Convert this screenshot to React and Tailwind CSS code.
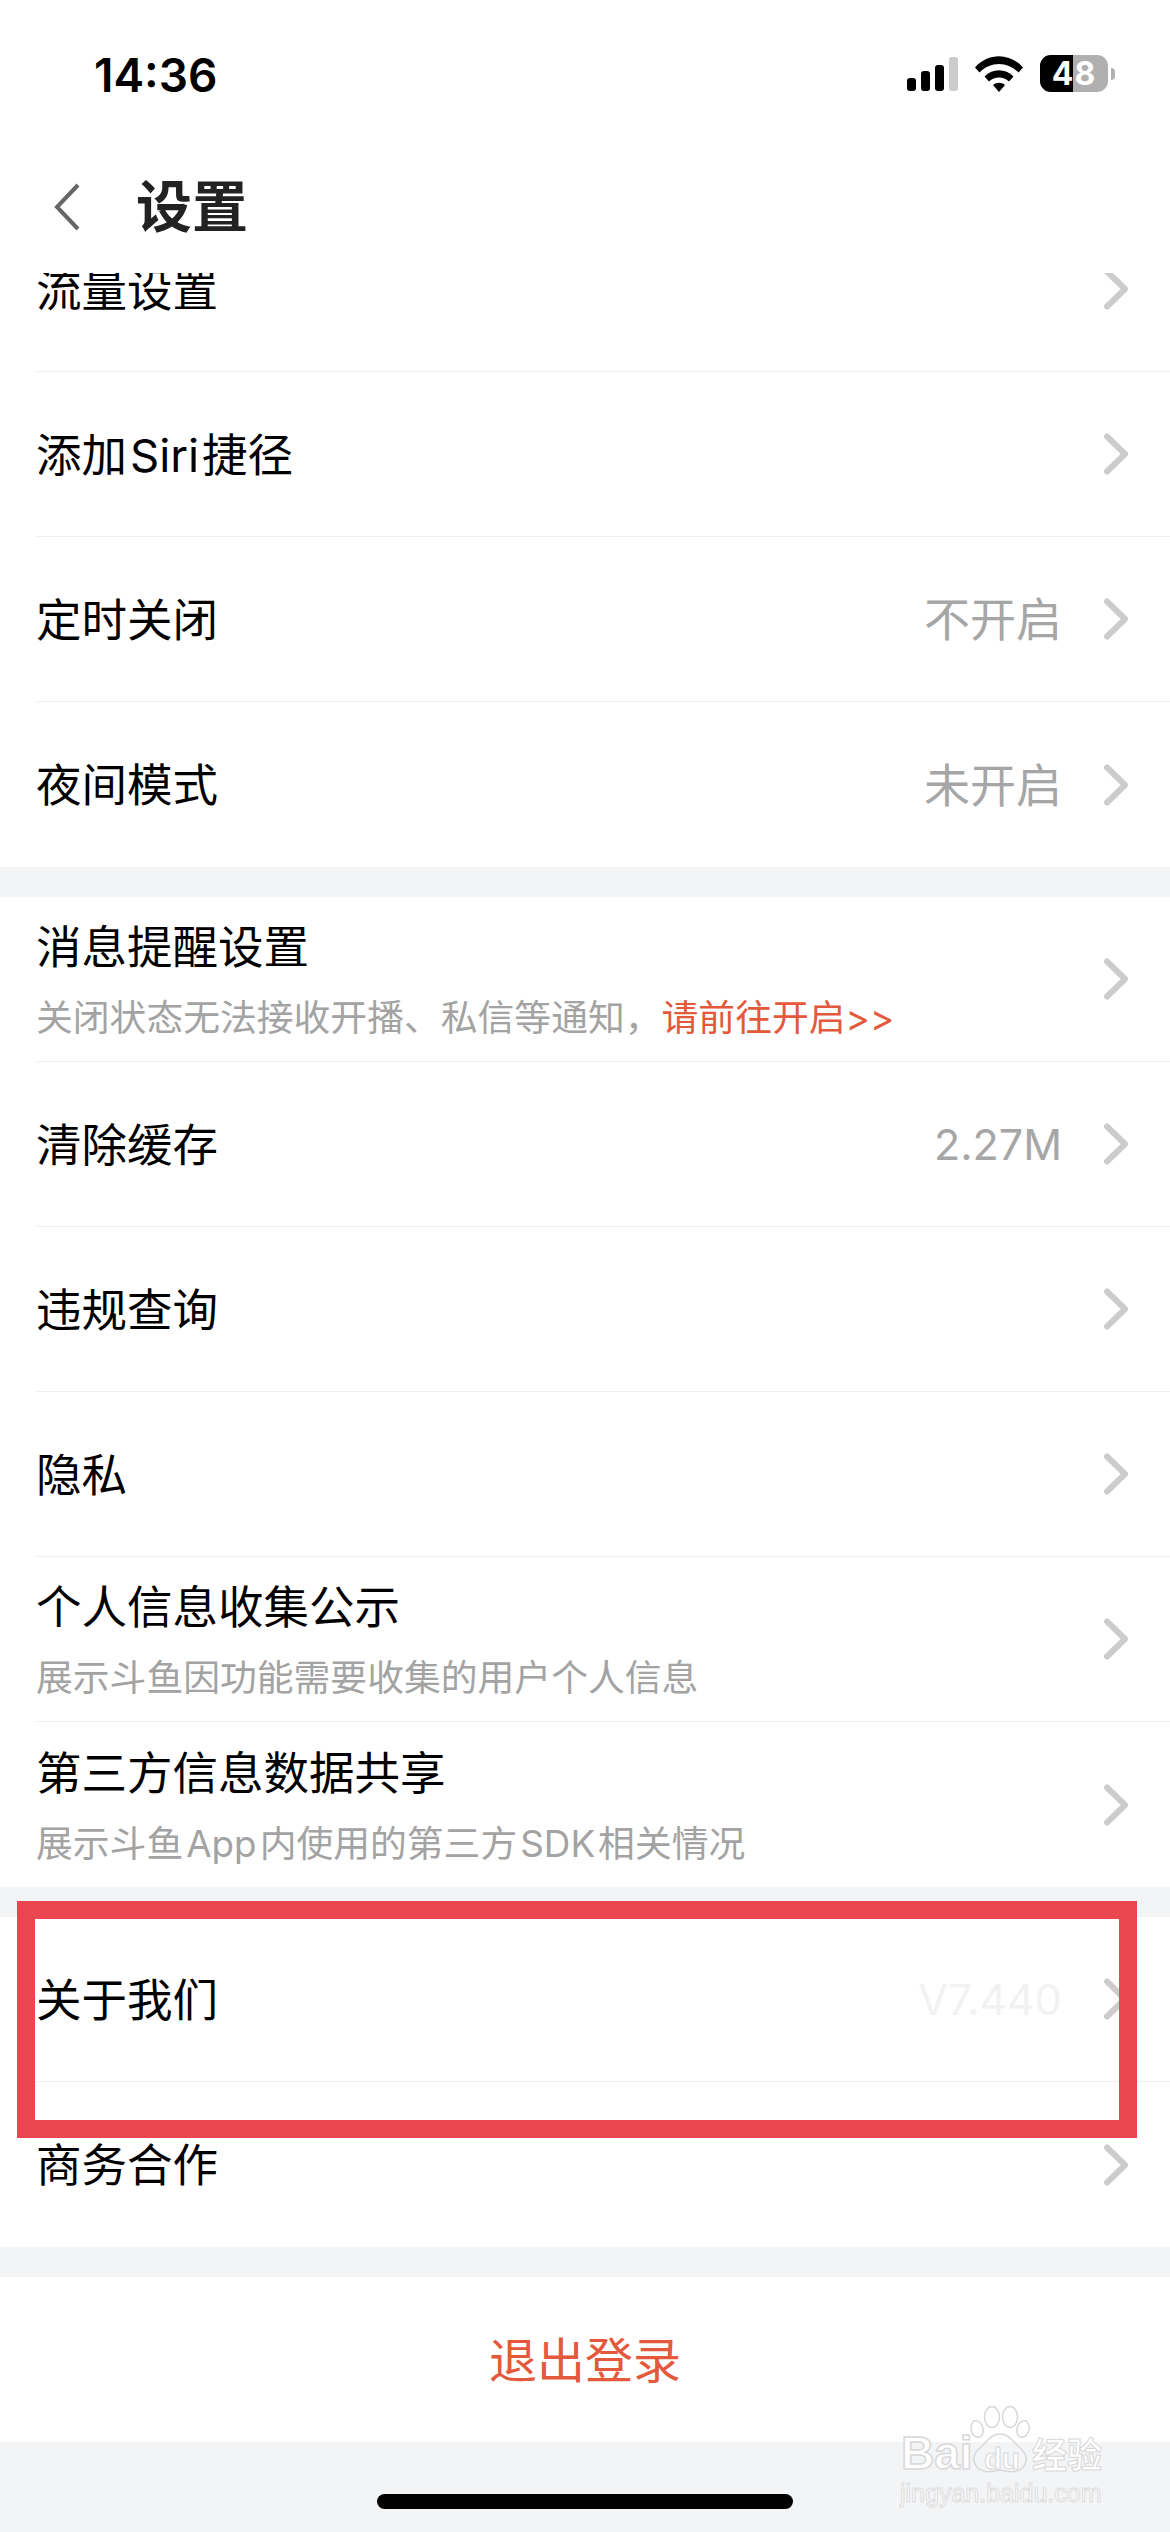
import React from 'react';

const Chevron = () => (
  <svg width="26" height="42" viewBox="0 0 26 42" fill="none" className="shrink-0">
    <path d="M4 3.500l18 17.500L4 38.500" stroke="#cccccc" strokeWidth="6" strokeLinecap="round" strokeLinejoin="round" />
  </svg>
);

const Latin = ({ children }) => <span className="mx-[3px]">{children}</span>;

const Row = ({ title, sub, value, valueClass = 'text-[46px] text-[#a6a6a6]' }) => (
  <div className="h-[165px] ml-[36px] pr-[41px] flex items-center border-b border-[#efefef] last:border-b-0">
    <div className="flex-1 min-w-0 pt-[3px]">
      <div className="text-[45.5px] leading-[60px] text-black">{title}</div>
      {sub && <div className="text-[36.8px] leading-[50px] mt-[15px] text-[#a3a3a3] whitespace-nowrap">{sub}</div>}
    </div>
    {value && <div className={`pt-[1px] mr-[41px] ${valueClass}`}>{value}</div>}
    <Chevron />
  </div>
);

const StatusIcons = () => (
  <div className="flex items-center">
    <svg width="51" height="34" viewBox="0 0 51 34">
      <rect x="0" y="21" width="9" height="13" rx="3" fill="#000" />
      <rect x="14" y="14" width="9" height="20" rx="3" fill="#000" />
      <rect x="28" y="8" width="9" height="26" rx="3" fill="#000" />
      <rect x="42" y="0" width="9" height="34" rx="3" fill="#cccccc" />
    </svg>
    <svg width="48" height="36" viewBox="0 0 48 36" className="ml-[17px]">
      <path d="M0 11.500C13-3.500 35-3.500 48 11.500l-4.500 5C32.500 5 15.500 5 4.500 16.500z" fill="#000" />
      <path d="M9.500 20.500c8-8.500 21-8.500 29 0l-4.500 5c-5.500-5.500-14.500-5.500-20 0z" fill="#000" />
      <path d="M18 29c3.500-3 8.500-3 12 0l-6 7z" fill="#000" />
    </svg>
    <div className="ml-[17px] relative w-[68px] h-[37px] rounded-[11px] overflow-hidden bg-[#b0b0b0] flex items-center justify-center">
      <div className="absolute left-0 top-0 bottom-0 w-[33px] bg-black" />
      <span className="relative text-[32px] leading-none font-bold text-white tracking-[1px]">48</span>
    </div>
    <div className="ml-[3px] w-[4px] h-[12px] rounded-r-full bg-[#b0b0b0]" />
  </div>
);

// baidu jingyan watermark, white letters with a thin grey outline
const Watermark = () => (
  <div className="absolute left-[896px] top-[2405px] w-[215px] text-white font-['Liberation_Sans',sans-serif] pointer-events-none">
    <svg width="64" height="70" viewBox="0 0 64 70" fill="none" stroke="#d8d8d8" strokeWidth="1.500" className="absolute left-[72px] top-0">
      <ellipse cx="24" cy="12" rx="7.500" ry="10.500" />
      <ellipse cx="42" cy="12" rx="7.500" ry="10.500" />
      <ellipse cx="9" cy="24" rx="6" ry="8.500" transform="rotate(-15 9 24)" />
      <ellipse cx="55" cy="24" rx="6" ry="8.500" transform="rotate(15 55 24)" />
      <path d="M32 29c8 0 12 6 18 12 8 7 10 12 7 18-3 7-12 9-19 7-4-1-8-1-12 0-7 2-16 0-19-7-3-6-1-11 7-18 6-6 10-12 18-12z" />
    </svg>
    <div className="flex items-center pt-[26px] pl-[5px] h-[70px]">
      <span className="w-[71px] text-[46px] leading-[46px] font-bold [-webkit-text-stroke:1.5px_#d8d8d8]">Bai</span>
      <span className="w-[60px] pt-[12px] text-center text-[29px] leading-[30px] font-bold [-webkit-text-stroke:1px_#d8d8d8]">du</span>
      <span className="text-[35px] leading-[40px] font-bold whitespace-nowrap font-['Noto_Sans_CJK_SC',sans-serif] [-webkit-text-stroke:1px_#d8d8d8]">经验</span>
    </div>
    <div className="mt-[4px] pl-[4px] text-[25px] leading-[28px] [-webkit-text-stroke:1px_#dcdcdc] whitespace-nowrap">jingyan.baidu.com</div>
  </div>
);

export default function App() {
  return (
    <div className="relative w-[1170px] h-[2532px] overflow-hidden bg-[#f3f4f6] font-['Inter','Noto_Sans_CJK_SC',sans-serif]">
      <div className="relative z-10 h-[273px] bg-white">
        <div className="h-[150px] pl-[94px] pr-[55px] flex items-start justify-between pt-[55px]">
          <span className="mt-[2px] text-[46px] leading-[37px] font-semibold text-black">14:36</span>
          <StatusIcons />
        </div>
        <div className="flex items-center pl-[54px] h-[114px]">
          <svg width="26" height="48" viewBox="0 0 26 48" fill="none">
            <path d="M24 2L3 24l21 22" stroke="#666666" strokeWidth="4" />
          </svg>
          <span className="ml-[56px] text-[56px] leading-none font-bold text-[#222222]">设置</span>
        </div>
      </div>

      <div className="-mt-[66px]">
        <div className="bg-white">
          <Row title="流量设置" />
          <Row title={<>添加<Latin>Siri</Latin>捷径</>} />
          <Row title="定时关闭" value="不开启" />
          <Row title="夜间模式" value="未开启" />
        </div>
        <div className="h-[30px]" />
        <div className="bg-white">
          <Row title="消息提醒设置" sub={<>关闭状态无法接收开播、私信等通知，<span className="text-[#e4593b]">请前往开启&gt;&gt;</span></>} />
          <Row title="清除缓存" value="2.27M" valueClass="text-[43px] text-[#a6a6a6]" />
          <Row title="违规查询" />
          <Row title="隐私" />
          <Row title="个人信息收集公示" sub="展示斗鱼因功能需要收集的用户个人信息" />
          <Row title="第三方信息数据共享" sub={<>展示斗鱼<Latin>App</Latin>内使用的第三方<Latin>SDK</Latin>相关情况</>} />
        </div>
        <div className="h-[30px]" />
        <div className="bg-white">
          <Row title="关于我们" value="V7.440" valueClass="text-[43px] text-[#f2f2f2]" />
          <Row title="商务合作" />
        </div>
        <div className="h-[30px]" />
        <div className="h-[165px] pt-[2px] bg-white flex items-center justify-center text-[48px] text-[#e4593b]">退出登录</div>
      </div>

      <div className="absolute left-[17px] top-[1901px] w-[1120px] h-[237px] border-[18px] border-[#ea4650]" />
      <div className="absolute left-[377px] top-[2494px] w-[416px] h-[15px] rounded-full bg-black" />
      <Watermark />
    </div>
  );
}
